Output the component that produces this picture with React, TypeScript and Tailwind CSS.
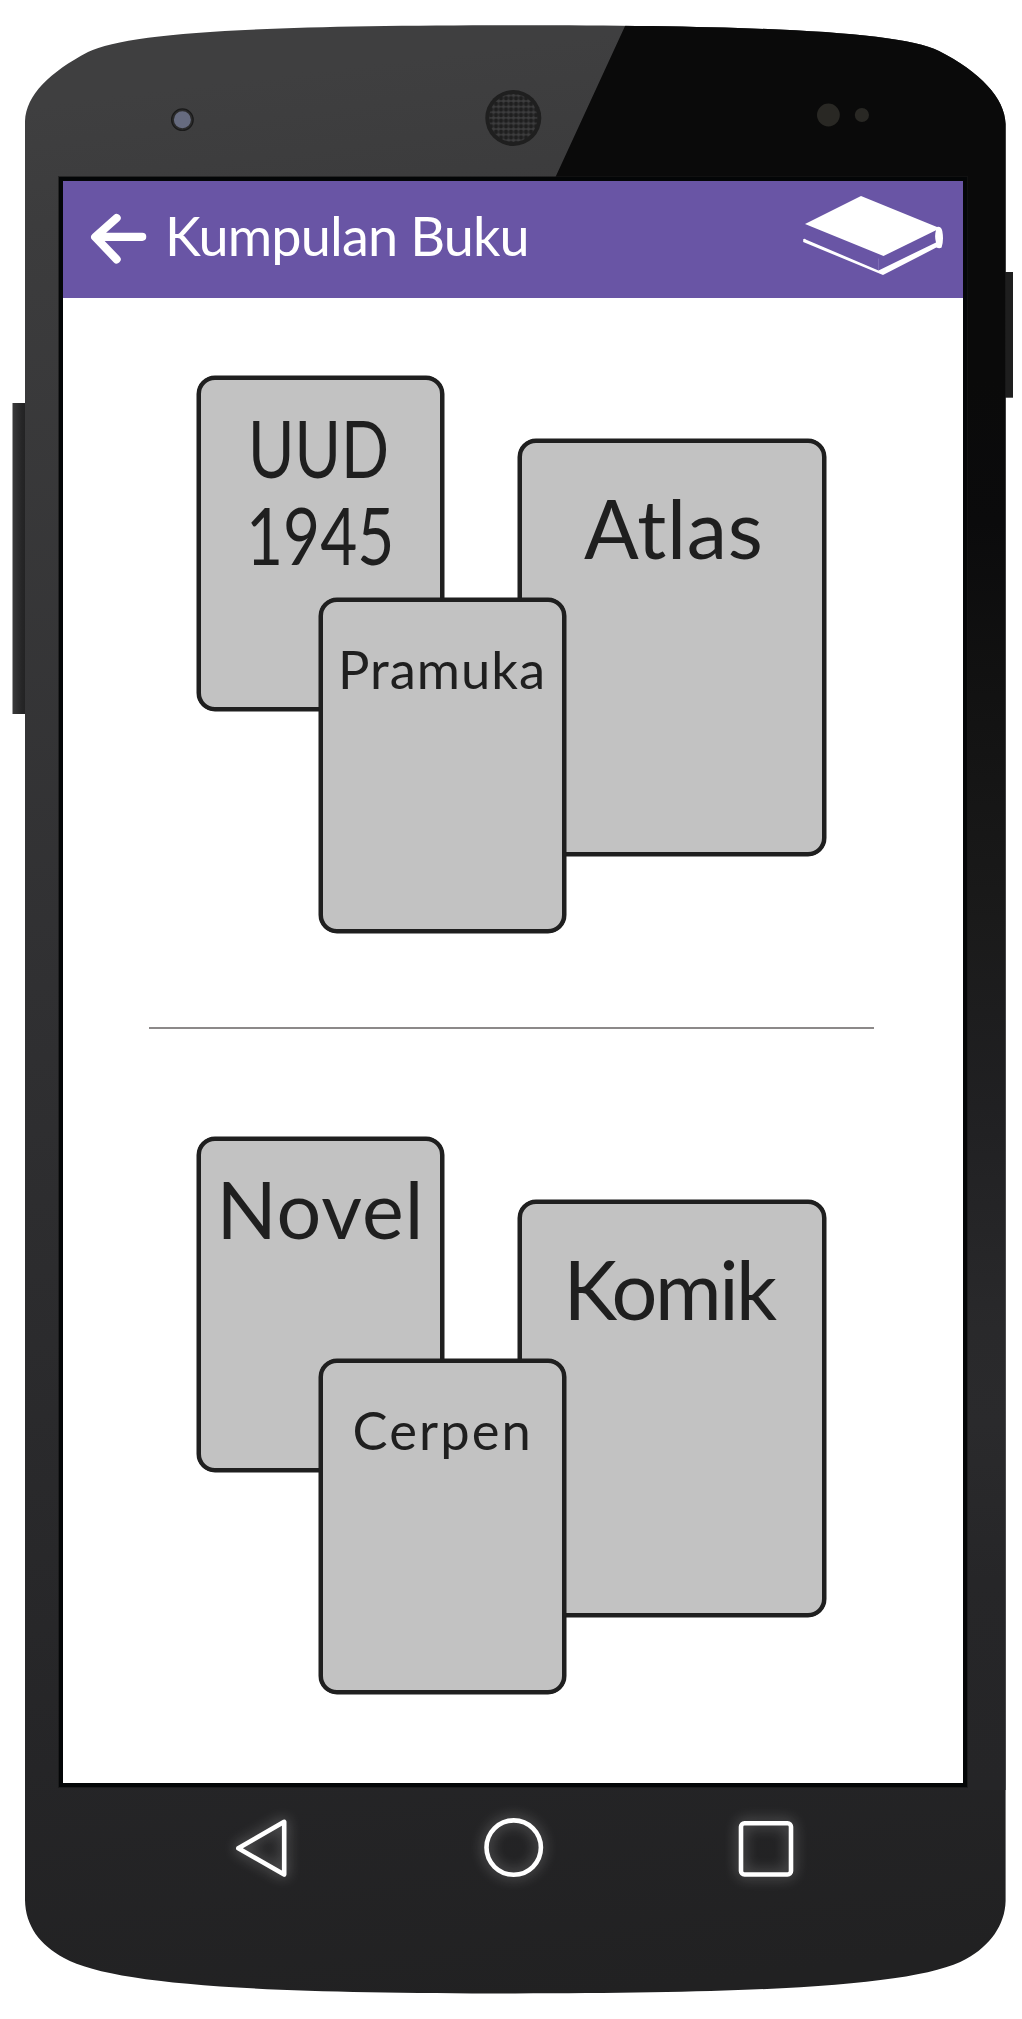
import type { ReactNode } from "react";

function DeviceShell() {
  return (
    <svg className="absolute inset-0" width="1022" height="2019" viewBox="0 0 1022 2019" fill="none" aria-hidden="true">
      <defs>
        <linearGradient id="body" gradientUnits="userSpaceOnUse" x1="400" y1="60" x2="640" y2="1990">
          <stop offset="0" stopColor="#3f3f40" />
          <stop offset="0.06" stopColor="#3c3c3d" />
          <stop offset="0.45" stopColor="#303032" />
          <stop offset="0.85" stopColor="#252527" />
          <stop offset="1" stopColor="#212122" />
        </linearGradient>
        <linearGradient id="shade" gradientUnits="userSpaceOnUse" x1="0" y1="380" x2="0" y2="1960">
          <stop offset="0" stopColor="#0a0a0a" />
          <stop offset="0.09" stopColor="#0b0b0c" />
          <stop offset="0.2" stopColor="#121212" />
          <stop offset="0.34" stopColor="#1a1a1a" />
          <stop offset="0.46" stopColor="#202022" />
          <stop offset="0.6" stopColor="#29292b" />
          <stop offset="0.66" stopColor="#2a2a2c" />
          <stop offset="0.76" stopColor="#262628" />
          <stop offset="0.89" stopColor="#252527" />
          <stop offset="1" stopColor="#242426" />
        </linearGradient>
        <linearGradient id="rocker" x1="0" y1="0" x2="1" y2="0">
          <stop offset="0" stopColor="#3a3a3b" />
          <stop offset="0.7" stopColor="#262627" />
          <stop offset="1" stopColor="#222223" />
        </linearGradient>
        <pattern id="mesh" patternUnits="userSpaceOnUse" x="503.5" y="112.3" width="5" height="5.6">
          <rect width="5" height="5.6" fill="#3d3d3e" />
          <circle cx="2.5" cy="2.8" r="2.25" fill="#1f1f1f" />
        </pattern>
        <clipPath id="outline">
          <path d="M25 121C26 95 50 72 88 52C130 31 280 25.2 515 25.2C750 25.2 898 31 939 51C980 72 1005 98 1005.6 124V1901C1005 1925 990 1946 966 1959C920 1985 770 1993.4 515 1993.4C260 1993.4 113 1985 64 1958C40 1945 25.4 1926 25 1900Z" />
        </clipPath>
      </defs>
      <rect x="12.5" y="403" width="13" height="311" fill="url(#rocker)" />
      <rect x="1005" y="272" width="8" height="125.7" fill="#1e1e1e" />
      <g clipPath="url(#outline)">
        <rect x="25" y="25" width="981" height="1969" fill="url(#body)" />
        <path d="M625.5 25H1006V1790H960V177H555.5Z" fill="url(#shade)" />
      </g>
      <circle cx="182.4" cy="119.7" r="10.8" fill="#2b2b2b" stroke="#1a1a1a" strokeWidth="1.2" />
      <circle cx="182.4" cy="119.7" r="8.5" fill="#666b7f" />
      <circle cx="513.3" cy="118" r="28" fill="#1f1f1f" />
      <circle cx="513.3" cy="118" r="24" fill="url(#mesh)" />
      <circle cx="828.4" cy="115" r="11.4" fill="#292824" />
      <circle cx="861.9" cy="115" r="7.1" fill="#292824" />
    </svg>
  );
}

function ArrowLeft() {
  return (
    <svg className="mt-[31px] ml-[26px] shrink-0" width="60" height="54" viewBox="89 212 60 54" fill="none" stroke="#fff" strokeWidth="8.2" strokeLinecap="round" strokeLinejoin="round">
      <path d="M116.6 218L95.2 237L116.6 259.3M97 236.8H142.2" />
    </svg>
  );
}

function BookIcon() {
  return (
    <svg className="mt-[13px] mr-[8px] ml-auto shrink-0" width="155" height="86" viewBox="800 194 155 86">
      <path fill="#fff" d="M805 224.1L861 196L937 227Q941 226 942.3 231Q944 240 941.6 247.6Q939.5 248.8 936.3 247.6L883 275L803.2 242V239.3Q804.3 238.2 806.3 239.8L878.5 270.4L936 242.5Q934.2 236 936 230.3L883.5 256Z" />
      <path d="M878.5 258.5V270" stroke="#8b7bc0" strokeWidth="0.6" />
    </svg>
  );
}

function Book({ className, children }: { className: string; children: ReactNode }) {
  return (
    <article className={`col-start-1 row-start-1 rounded-[18px] border-4 border-[#1f1f1f] bg-[#c2c2c2] text-[#1f1f1f] shadow-[0_0_0_0.5px_#1f1f1f] ${className}`}>
      {children}
    </article>
  );
}

const SMALL = "h-[335px] w-[247px]";
const BACK_LEFT = `${SMALL} ml-[133.5px] pt-[24px] text-[79px] leading-[87px]`;
const BACK_RIGHT = "mt-[63px] ml-[455px] h-[417px] w-[307.5px] pt-[45px] text-[81px] leading-[80px]";
const FRONT = `${SMALL} mt-[222px] ml-[255.5px] pt-[37px] text-[52.5px] leading-[60px]`;

export default function App() {
  return (
    <div className="relative h-[2019px] w-[1022px] overflow-hidden bg-white font-['Lato',sans-serif] whitespace-nowrap">
      <DeviceShell />
      <div className="relative flex h-full flex-col pt-[177px] pl-[59px]">
        <main className="flex h-[1610px] w-[908px] shrink-0 flex-col border-4 border-[#040607] bg-white outline outline-[#161616]/60">
          <header className="flex h-[116.5px] shrink-0 items-start bg-[#6955a5] text-white">
            <ArrowLeft />
            <h1 className="mt-[25px] ml-[16px] text-[54px] leading-[60px] tracking-[-0.85px]">Kumpulan Buku</h1>
            <BookIcon />
          </header>

          <section className="mt-[78px] grid h-[557px] shrink-0 items-start justify-start">
            <Book className={BACK_LEFT}>
              <h2>
                <span className="ml-[47.5px] block origin-left scale-x-[0.8]">UUD</span>
                <span className="ml-[45.5px] block origin-left scale-x-[0.81]">1945</span>
              </h2>
            </Book>
            <Book className={BACK_RIGHT}>
              <h2 className="pl-[62px] tracking-[0.75px]">Atlas</h2>
            </Book>
            <Book className={FRONT}>
              <h2 className="pl-[15.5px] tracking-[1px]">Pramuka</h2>
            </Book>
          </section>

          <hr className="mt-[94px] ml-[86px] h-[2px] w-[725px] shrink-0 border-0 bg-[#8c8989]" />

          <section className="mt-[108px] grid h-[557px] shrink-0 items-start justify-start">
            <Book className={BACK_LEFT}>
              <h2 className="pl-[16px] tracking-[1px]">Novel</h2>
            </Book>
            <Book className={BACK_RIGHT}>
              <h2 className="pl-[41.5px] tracking-[-2.5px]">Komik</h2>
            </Book>
            <Book className={FRONT}>
              <h2 className="pl-[30px] tracking-[2.1px]">Cerpen</h2>
            </Book>
          </section>
        </main>

        <nav className="mt-[14px] ml-[159px] flex w-[596px] justify-between text-white [&_svg]:drop-shadow-[0_0_7px_rgba(255,255,255,0.4)]">
          <svg width="92" height="92" viewBox="218 1801 92 92" fill="none" stroke="currentColor" strokeWidth="4.6" strokeLinejoin="round">
            <path d="M238.3 1848.3L284.2 1821.8V1874.6Z" />
          </svg>
          <svg width="92" height="92" viewBox="470 1801 92 92" fill="none" stroke="currentColor" strokeWidth="4.6">
            <circle cx="513.7" cy="1847.6" r="27.2" />
          </svg>
          <svg width="92" height="92" viewBox="722 1801 92 92" fill="none" stroke="currentColor" strokeWidth="4.6">
            <rect x="741" y="1823.3" width="50" height="51.2" rx="3.5" />
          </svg>
        </nav>
      </div>
    </div>
  );
}
